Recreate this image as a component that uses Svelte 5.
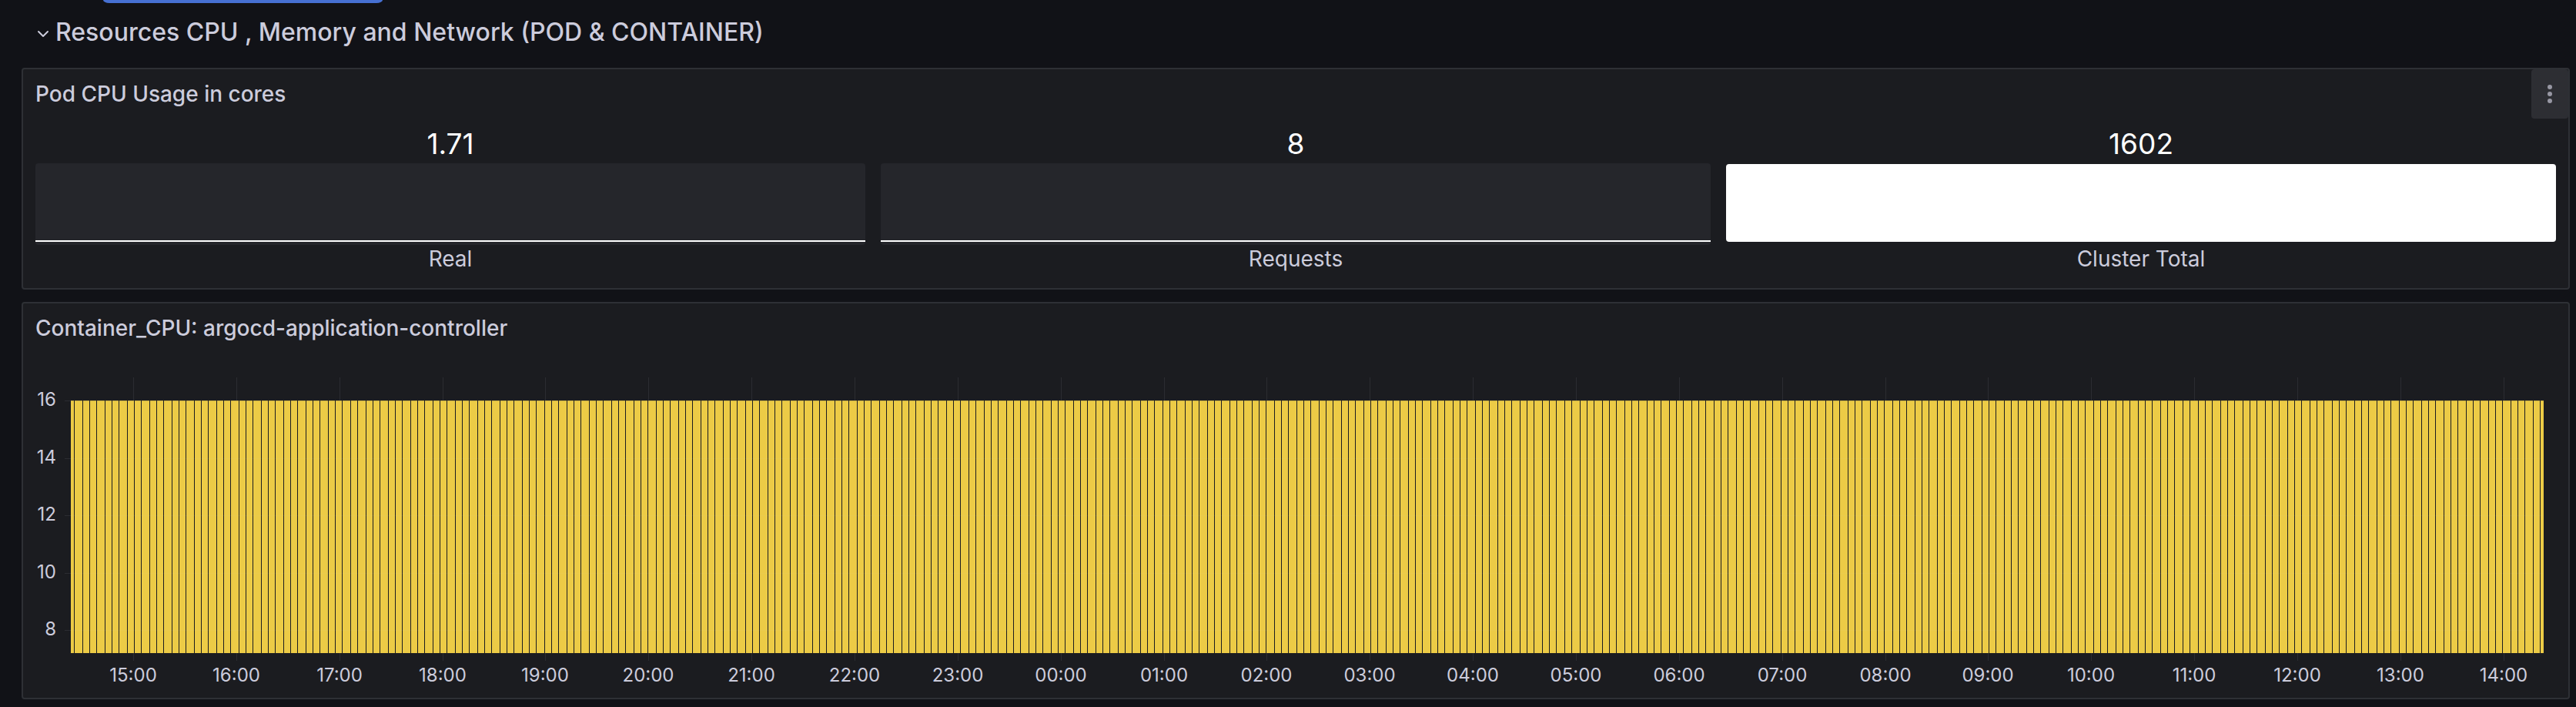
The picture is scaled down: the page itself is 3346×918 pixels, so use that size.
<script>
  const gauges = [
    { label: 'Real', value: '1.71', full: false },
    { label: 'Requests', value: '8', full: false },
    { label: 'Cluster Total', value: '1602', full: true },
  ];
  const hours = Array.from({ length: 24 }, (_, i) => String((15 + i) % 24).padStart(2, '0') + ':00');
  const levels = [16, 14, 12, 10, 8];

  // Chart coordinates: the plot spans 3212 units across and 368 down.
  const W = 3212;
  const tickX = (i) => Math.round(81 + i * 133.86);
  const tickY = (i) => Math.round(30 + i * 74.5);
  const dividers = Array.from({ length: 332 }, (_, k) => 4 + 9 * k + 2 * Math.ceil(k * 0.33742 - 0.153));
</script>

<div class="page">
  <div class="tab"></div>
  <h2>
    <button class="toggle" aria-expanded="true">
      <svg width="16" height="16" viewBox="0 0 16 16" aria-hidden="true">
        <path d="M2 5 L8 11 L14 5" fill="none" stroke="currentColor" stroke-width="2" stroke-linecap="round" stroke-linejoin="round" />
      </svg>
      <span>Resources CPU , Memory and Network (POD &amp; CONTAINER)</span>
    </button>
  </h2>

  <section class="panel">
    <header>
      <h3>Pod CPU Usage in cores</h3>
      <button class="menu" aria-label="Menu">
        <svg width="8" height="26" viewBox="0 0 8 26" aria-hidden="true">
          <circle cx="4" cy="4" r="3" /><circle cx="4" cy="13" r="3" /><circle cx="4" cy="22" r="3" />
        </svg>
      </button>
    </header>
    <div class="gauges">
      {#each gauges as g}
        <div class="gauge">
          <div class="value">{g.value}</div>
          <div class="bar" class:full={g.full}><div class="fill"></div></div>
          <div class="label">{g.label}</div>
        </div>
      {/each}
    </div>
  </section>

  <section class="panel">
    <header>
      <h3>Container_CPU: argocd-application-controller</h3>
    </header>
    <div class="chart">
      <div class="yaxis">
        {#each levels as l}<span>{l}</span>{/each}
      </div>
      <div class="plot">
        <svg viewBox="0 0 {W} 368" preserveAspectRatio="none" shape-rendering="crispEdges" role="img" aria-label="CPU usage over time">
          {#each hours as _, i}
            <rect class="grid" x={tickX(i)} y="0" width="1" height="368" />
          {/each}
          <rect class="area" x="0" y="30" width={W} height="328" />
          <rect class="edge" x="0" y="30" width={W} height="1" />
          {#each dividers as x}
            <rect class="divider" {x} y="30" width="1" height="328" />
          {/each}
          {#each levels as _, i}
            <rect class="grid" x="-8" y={tickY(i)} width="8" height="1" />
            <rect class="overlay" x="0" y={tickY(i)} width={W} height="1" />
          {/each}
        </svg>
        <div class="xaxis">
          {#each hours as h, i}
            <span style:left="{(tickX(i) / W) * 100}%">{h}</span>
          {/each}
        </div>
      </div>
    </div>
  </section>
</div>

<style>
  :global(body) { margin: 0; background: #111217; }
  .page {
    box-sizing: border-box;
    padding: 0 8px 10px 28px;
    display: flex;
    flex-direction: column;
    background: #111217;
    color: #ccccdc;
    font-family: Inter, sans-serif;
  }
  .tab {
    width: 363px;
    height: 4px;
    margin-left: 106px;
    border-radius: 0 0 8px 8px / 0 0 4px 4px;
    background: #4670d2;
  }
  h2, h3 { margin: 0; font-weight: 500; }
  h2 { height: 84px; }
  .toggle {
    display: flex;
    align-items: center;
    gap: 8px;
    height: 76px;
    margin-left: 20px;
    padding: 0;
    border: 0;
    background: none;
    color: inherit;
    font: 500 32px/48px Inter, sans-serif;
  }
  .toggle svg { margin-top: 4px; }
  .panel {
    border: 2px solid #2e3035;
    border-radius: 4px;
    background: #1b1c20;
  }
  .panel + .panel { margin-top: 16px; }
  header {
    display: flex;
    justify-content: space-between;
    align-items: center;
    height: 64px;
    padding-left: 16px;
  }
  h3 { font-size: 28px; line-height: 44px; }
  .menu {
    display: flex;
    align-items: center;
    justify-content: center;
    width: 48px;
    height: 64px;
    padding: 0;
    border: 0;
    border-radius: 4px;
    background: #2d2e33;
  }
  .menu svg { fill: #9797a3; }
  .gauges {
    display: flex;
    gap: 20px;
    padding: 8px 16px 20px;
  }
  .gauge { flex: 1; text-align: center; }
  .value {
    color: #fff;
    font-size: 37px;
    line-height: 50px;
  }
  .bar {
    display: flex;
    flex-direction: column;
    justify-content: flex-end;
    box-sizing: border-box;
    height: 106px;
    padding-bottom: 4px;
    border-radius: 4px;
    background: #25262b;
  }
  .fill { height: 2px; background: #fff; }
  .full { background: none; }
  .full .fill { height: 101px; border-radius: 4px; }
  .label { font-size: 28px; line-height: 36px; }
  .chart {
    display: flex;
    padding: 32px 32px 0 0;
  }
  .yaxis {
    display: flex;
    flex-direction: column;
    justify-content: space-between;
    box-sizing: border-box;
    width: 62px;
    height: 368px;
    padding: 13px 19px 25px 0;
    text-align: right;
    font-size: 24px;
    line-height: 32px;
  }
  .plot { flex: 1; min-width: 0; }
  .plot svg {
    display: block;
    width: 100%;
    height: 368px;
    overflow: visible;
  }
  .grid { fill: #2b2c31; }
  .overlay { fill: #ccccdc; fill-opacity: 0.06; }
  .area { fill: #eccb46; }
  .edge { fill: #c5aa3e; }
  .divider { fill: #1b1c20; }
  .xaxis {
    position: relative;
    height: 48px;
    font-size: 24px;
    line-height: 38px;
  }
  .xaxis span {
    position: absolute;
    transform: translateX(-50%);
  }
</style>
